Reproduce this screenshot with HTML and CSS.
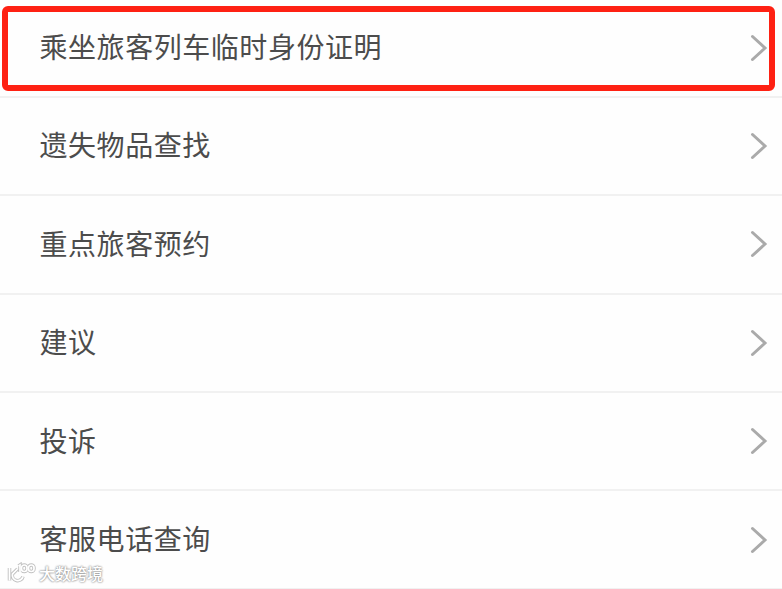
FILE: index.html
```html
<!DOCTYPE html>
<html lang="zh-CN">
<head>
  <meta charset="UTF-8">
  <meta name="viewport" content="width=device-width, initial-scale=1.0">
  <title>温馨服务</title>
  <link rel="stylesheet" href="styles.css">
</head>
<body>
  <ul class="list">
    <li class="item active">
      <span>乘坐旅客列车临时身份证明</span>
      <svg class="arrow" viewBox="0 0 18 28"><path d="M2.500 2.500l12.500 11.500L2.500 25.500"/></svg>
    </li>
    <li class="item">
      <span>遗失物品查找</span>
      <svg class="arrow" viewBox="0 0 18 28"><path d="M2.500 2.500l12.500 11.500L2.500 25.500"/></svg>
    </li>
    <li class="item">
      <span>重点旅客预约</span>
      <svg class="arrow" viewBox="0 0 18 28"><path d="M2.500 2.500l12.500 11.500L2.500 25.500"/></svg>
    </li>
    <li class="item">
      <span>建议</span>
      <svg class="arrow" viewBox="0 0 18 28"><path d="M2.500 2.500l12.500 11.500L2.500 25.500"/></svg>
    </li>
    <li class="item">
      <span>投诉</span>
      <svg class="arrow" viewBox="0 0 18 28"><path d="M2.500 2.500l12.500 11.500L2.500 25.500"/></svg>
    </li>
    <li class="item">
      <span>客服电话查询</span>
      <svg class="arrow" viewBox="0 0 18 28"><path d="M2.500 2.500l12.500 11.500L2.500 25.500"/></svg>
    </li>
  </ul>
  <div class="watermark">
    <svg class="logo" viewBox="0 0 30 22">
      <defs>
        <g id="logo">
          <path d="M3.500 6v12.500M11.500 7L6.500 12a5.300 5.300 0 0 0 10.500 2.500M12.500 4l1.500-1v7"/>
          <rect x="15.500" y="3" width="5.500" height="6.500" rx="2.700"/>
          <rect x="22.500" y="3" width="5.500" height="6.500" rx="2.700"/>
        </g>
      </defs>
      <use class="edge" href="#logo"/>
      <use class="line" href="#logo"/>
    </svg>
    <span>大数跨境</span>
  </div>
</body>
</html>
```

FILE: styles.css
```css
*{
  margin: 0;
  padding: 0;
  box-sizing: border-box;
}
body{
  height: 589px;
  overflow: hidden;
  background-color: #fefefe;
  font-family: 'Noto Sans CJK SC', sans-serif;
  color: #4c4c4c;
}
.list{
  list-style: none;
}
.item{
  height: 98.400px;
  padding: 0 14px 0 39.500px;
  display: flex;
  justify-content: space-between;
  align-items: center;
  border-bottom: 2px solid #f1f1f1;
  font-size: 28px;
  letter-spacing: 0.550px;
  position: relative;
}
.item span{
  padding-bottom: 3px;
}
.item.active{
  height: 97.800px;
}
.item.active::after{
  content: '';
  box-sizing: border-box;
  position: absolute;
  left: 2px;
  top: 6px;
  width: 773px;
  height: 85px;
  border: 6px solid #fe2113;
  border-radius: 6px;
}
.arrow{
  width: 18px;
  height: 28px;
  fill: none;
  stroke: #aaa;
  stroke-width: 3;
  stroke-linecap: round;
}
.watermark{
  position: absolute;
  left: 6px;
  top: 561px;
  display: flex;
  align-items: center;
  gap: 3px;
  font-size: 16px;
  font-weight: 500;
  line-height: 24px;
  color: #fff;
  text-shadow: 0 0 2px #888, 0 0 2px #999;
}
.logo{
  width: 30px;
  height: 22px;
  fill: none;
}
.edge{
  stroke: #c0c0c0;
  stroke-width: 3.500;
}
.line{
  stroke: #fff;
  stroke-width: 1.700;
}
```
